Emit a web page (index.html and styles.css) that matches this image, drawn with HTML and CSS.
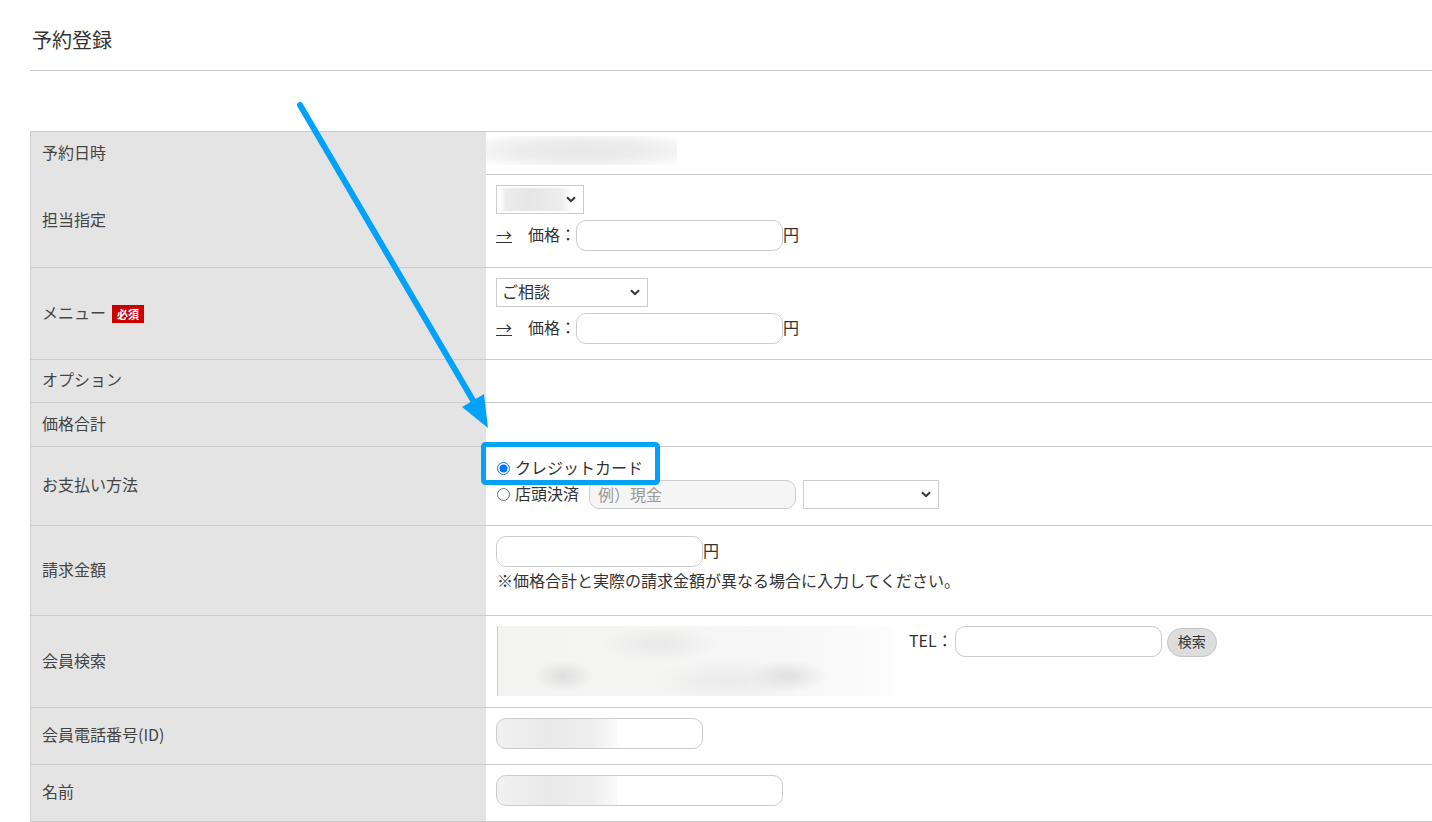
FILE: index.html
```html
<!DOCTYPE html>
<html lang="ja">
<head>
  <meta charset="UTF-8">
  <meta name="viewport" content="width=device-width, initial-scale=1.0">
  <title>予約登録</title>
  <link rel="stylesheet" href="styles.css">
</head>
<body>
  <div class="page">
    <div class="page-head">
      <h1>予約登録</h1>
    </div>

    <div class="form-table">
      <div class="row h43">
        <div class="th">予約日時</div>
        <div class="td"><div class="blur blur-date"></div></div>
      </div>

      <div class="row h93">
        <div class="th">担当指定</div>
        <div class="td">
          <div class="sel sel-staff">
            <select><option></option></select>
            <svg class="chev" width="10" height="7" viewBox="0 0 10 7"><path d="M1 1.2l4 4 4-4" fill="none" stroke="#333" stroke-width="2"/></svg>
          </div>
          <div class="line gap6">
            <a class="arrow-link" href="#">→</a><span>　価格：</span><input class="txt" type="text"><span>円</span>
          </div>
        </div>
      </div>

      <div class="row h92">
        <div class="th">メニュー<span class="req">必須</span></div>
        <div class="td">
          <div class="sel sel-menu">
            <select><option>ご相談</option></select>
            <svg class="chev" width="10" height="7" viewBox="0 0 10 7"><path d="M1 1.2l4 4 4-4" fill="none" stroke="#333" stroke-width="2"/></svg>
          </div>
          <div class="line gap6">
            <a class="arrow-link" href="#">→</a><span>　価格：</span><input class="txt" type="text"><span>円</span>
          </div>
        </div>
      </div>

      <div class="row h43">
        <div class="th">オプション</div>
        <div class="td"></div>
      </div>

      <div class="row h44">
        <div class="th">価格合計</div>
        <div class="td"></div>
      </div>

      <div class="row h79">
        <div class="th">お支払い方法</div>
        <div class="td">
          <label class="radio-line"><input type="radio" name="pay" checked><span>クレジットカード</span></label>
          <div class="radio-line line2">
            <label class="radio-inline"><input type="radio" name="pay"><span>店頭決済</span></label>
            <input class="txt txt-cash" type="text" placeholder="例）現金" disabled>
            <div class="sel sel-pay">
              <select><option></option></select>
              <svg class="chev" width="10" height="7" viewBox="0 0 10 7"><path d="M1 1.2l4 4 4-4" fill="none" stroke="#333" stroke-width="2"/></svg>
            </div>
          </div>
        </div>
      </div>

      <div class="row h90">
        <div class="th">請求金額</div>
        <div class="td">
          <div class="line"><input class="txt" type="text"><span>円</span></div>
          <p class="note">※価格合計と実際の請求金額が異なる場合に入力してください。</p>
        </div>
      </div>

      <div class="row h92">
        <div class="th">会員検索</div>
        <div class="td member">
          <div class="blur blur-member"></div>
          <span class="tel-label">TEL：</span>
          <input class="txt" type="text">
          <button class="btn-search" type="button">検索</button>
        </div>
      </div>

      <div class="row h57">
        <div class="th">会員電話番号(ID)</div>
        <div class="td"><input class="txt txt-blur" type="text"></div>
      </div>

      <div class="row h57">
        <div class="th">名前</div>
        <div class="td"><input class="txt txt-name txt-blur" type="text"></div>
      </div>
    </div>

    <svg class="annot" width="1432" height="822" viewBox="0 0 1432 822">
      <line x1="300" y1="105" x2="474" y2="402" stroke="#03a2fa" stroke-width="6" stroke-linecap="round"/>
      <polygon points="462,407 484,394 488,428" fill="#03a2fa"/>
      <rect x="483.5" y="444.5" width="174" height="38" rx="2" fill="none" stroke="#03a2fa" stroke-width="5"/>
    </svg>
  </div>
</body>
</html>
```

FILE: styles.css
```css
body {
  margin: 0;
  font-family: "Noto Sans CJK JP", "Noto Sans", sans-serif;
  font-size: 16px;
  line-height: 22px;
  color: #333;
  background-color: #fff;
  overflow: hidden;
}
.page {
  position: relative;
  padding-left: 30px;
  height: 822px;
}
.page-head {
  padding: 25px 0 15px 2px;
  border-bottom: 1px solid #ccc;
}
h1 {
  margin: 0;
  font-size: 20px;
  font-weight: normal;
  line-height: 30px;
  color: #333;
}
.form-table {
  margin-top: 60px;
  border-left: 1px solid #ccc;
  border-bottom: 1px solid #ccc;
}
.row {
  display: grid;
  grid-template-columns: 455px 1fr;
  border-top: 1px solid #ccc;
  box-sizing: border-box;
}
.h43 { height: 43px; }
.h44 { height: 44px; }
.h57 { height: 57px; }
.h79 { height: 79px; }
.h90 { height: 90px; }
.h92 { height: 92px; }
.h93 { height: 93px; }
.th {
  background-color: #e4e4e4;
  display: flex;
  align-items: center;
  padding: 0 0 4px 11px;
  color: #444;
}
.td {
  padding: 10px;
  min-width: 0;
}
.req {
  display: inline-block;
  margin: 4px 0 0 6px;
  padding: 0 5px;
  background-color: #c00;
  color: #fff;
  font-size: 11px;
  font-weight: bold;
  line-height: 18px;
}

/* selects */
.sel {
  display: inline-flex;
  align-items: center;
  height: 29px;
}
.sel select {
  appearance: none;
  -webkit-appearance: none;
  box-sizing: border-box;
  height: 29px;
  width: 100%;
  border: 1px solid #ccc;
  border-radius: 0;
  background-color: #fff;
  font-family: inherit;
  font-size: 16px;
  color: #333;
  padding: 0 22px 3px 5px;
}
.sel .chev {
  margin-left: -18px;
  flex: none;
}
.sel-staff { width: 88px; }
.sel-staff select {
  background: linear-gradient(to right, #fff 0, #ececec 6px, #e6e6e6 40%, #ededed 85%, #fff 100%);
  background-size: 72px 23px;
  background-position: 3px 2px;
  background-repeat: no-repeat;
  background-color: #fff;
}
.sel-menu { width: 152px; }
.sel-pay { width: 136px; margin-left: 7px; }

/* inputs */
.line {
  display: flex;
  align-items: center;
  height: 31px;
}
.line > span,
.line > .arrow-link {
  padding-bottom: 4px;
}
.gap6 { margin-top: 6px; }
.txt {
  box-sizing: border-box;
  width: 207px;
  height: 31px;
  border: 1px solid #ccc;
  border-radius: 10px;
  padding: 0 8px 2px;
  font-family: inherit;
  font-size: 16px;
  color: #333;
  background-color: #fff;
  outline: none;
}
.txt-name { width: 287px; }
.txt-blur {
  background: linear-gradient(to right, #f1f1f1, #e9e9e9 45%, #efefef 80%, #fafafa 100%);
  background-size: 120px 100%;
  background-repeat: no-repeat;
  background-color: #fff;
}
.arrow-link {
  color: #333;
  text-decoration: underline;
}

/* payment */
.radio-line {
  display: flex;
  align-items: center;
  height: 22px;
}
.radio-line span,
.radio-inline span {
  padding-bottom: 3px;
}
.radio-line input[type="radio"],
.radio-inline input[type="radio"] {
  width: 13px;
  height: 13px;
  margin: 0 5px 0 1px;
}
.radio-inline {
  display: flex;
  align-items: center;
}
.line2 {
  height: 29px;
  margin-top: 1px;
}
.txt-cash {
  height: 29px;
  margin-left: 10px;
  background-color: #f5f5f5;
}
.txt-cash::placeholder {
  color: #999;
}

.note {
  margin: 2px 0 0 1px;
  line-height: 22px;
}

/* member search */
.member {
  display: flex;
  align-items: flex-start;
}
.member .txt {
  margin-left: 2px;
}
.tel-label {
  margin-left: 16px;
  line-height: 28px;
}
.btn-search {
  margin: 2px 0 0 5px;
  width: 50px;
  height: 29px;
  border: 1px solid #c4c4c4;
  border-radius: 15px;
  background-color: #ddd;
  font-family: inherit;
  font-size: 14px;
  color: #333;
  padding: 0 0 3px;
}

/* blurred (masked) values */
.blur-date {
  margin: -6px 0 0 -10px;
  width: 191px;
  height: 29px;
  background: radial-gradient(ellipse at 50% 50%, #e8e8e8 0%, #ececec 45%, #f5f5f5 75%, rgba(255, 255, 255, 0) 100%);
}
.blur-member {
  flex: none;
  margin-left: 1px;
  width: 396px;
  height: 70px;
  background:
    radial-gradient(ellipse 30px 16px at 65px 50px, #dedede, rgba(255, 255, 255, 0)),
    radial-gradient(ellipse 40px 16px at 290px 50px, #e0e0e0, rgba(255, 255, 255, 0)),
    radial-gradient(ellipse 60px 18px at 160px 18px, #e8e8e8, rgba(255, 255, 255, 0)),
    radial-gradient(ellipse 80px 22px at 230px 55px, #eaeaea, rgba(255, 255, 255, 0)),
    linear-gradient(to right, #f4f4f2, #f6f6f6 70%, #fcfcfc);
  border-left: 1px solid #ccc;
  box-sizing: border-box;
}

.annot {
  position: absolute;
  top: 0;
  left: 0;
  pointer-events: none;
}
```
